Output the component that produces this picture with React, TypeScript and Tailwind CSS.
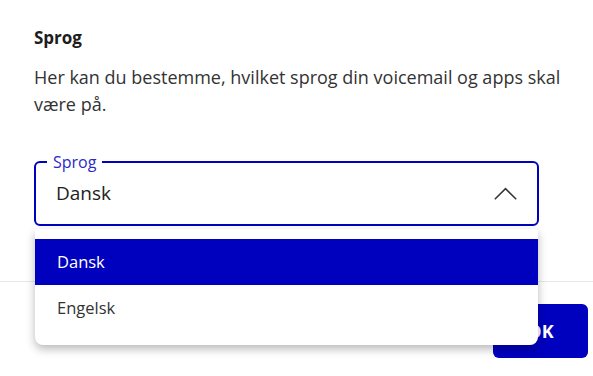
import { useState } from "react";

const options = ["Dansk", "Engelsk"];

function ChevronUp() {
  return (
    <svg width="23" height="13" viewBox="0 0 23 13" fill="none">
      <path d="M0.8 12.3 L11.5 1.6 L22.2 12.3" stroke="#333" strokeWidth="1.5" />
    </svg>
  );
}

export default function App() {
  const [selected, setSelected] = useState("Dansk");

  return (
    <div
      className="w-[593px] h-[376px] bg-white overflow-hidden text-[#222]"
      style={{ fontFamily: '"Open Sans", "Noto Sans", sans-serif' }}
    >
      {/* Indhold */}
      <div className="pl-[34px] pr-[10px] pt-[26px] h-[282px] border-b border-[#e6e6e6]">
        <h2 className="text-[17px] leading-6 font-bold text-[#1d1d1d]">Sprog</h2>
        <p className="mt-[14px] text-[18px] leading-[27px] text-[#333]">
          Her kan du bestemme, hvilket sprog din voicemail og apps skal være på.
        </p>

        {/* Sprog-vælger */}
        <div className="relative mt-[43px] w-[505px]">
          <div className="relative h-[65px] border-2 border-[#0000bf] rounded-[6px] flex items-center justify-between pl-5 pr-[20px]">
            <span className="absolute -top-[12px] left-[11px] bg-white px-[6px] text-[16px] leading-[22px] text-[#2a2ac9]">
              Sprog
            </span>
            <span className="text-[19px] text-[#222]">{selected}</span>
            <ChevronUp />
          </div>

          {/* Dropdown */}
          <ul className="absolute z-10 top-[68px] left-[1px] right-[1px] bg-white rounded-b-[8px] rounded-t-[3px] pt-[10px] pb-[14px] shadow-[0_4px_10px_rgba(0,0,0,0.28)]">
            {options.map((opt) => (
              <li
                key={opt}
                onClick={() => setSelected(opt)}
                className={`h-[46px] flex items-center pl-[22px] text-[16.5px] cursor-pointer ${
                  opt === selected ? "bg-[#0000bf] text-white" : "text-[#333]"
                }`}
              >
                {opt}
              </li>
            ))}
          </ul>
        </div>
      </div>

      {/* Footer */}
      <div className="flex justify-end pt-[22px] pr-[5px]">
        <button className="w-[95px] h-[54px] rounded-[6px] bg-[#0000bf] text-white font-bold text-[18px]">
          OK
        </button>
      </div>
    </div>
  );
}
